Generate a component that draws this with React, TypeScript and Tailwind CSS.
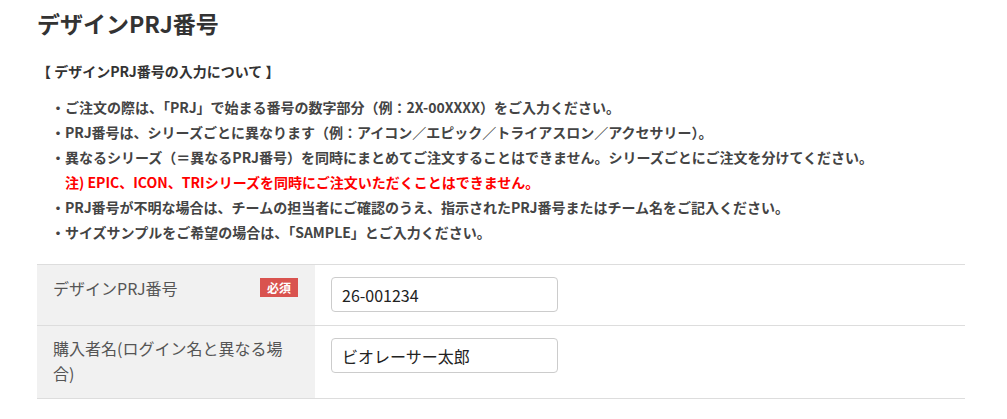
const notes = [
  { text: "・ご注文の際は、「PRJ」で始まる番号の数字部分（例：2X-00XXXX）をご入力ください。" },
  { text: "・PRJ番号は、シリーズごとに異なります（例：アイコン／エピック／トライアスロン／アクセサリー）。" },
  { text: "・異なるシリーズ（＝異なるPRJ番号）を同時にまとめてご注文することはできません。シリーズごとにご注文を分けてください。" },
  { text: "注) EPIC、ICON、TRIシリーズを同時にご注文いただくことはできません。", warn: true },
  { text: "・PRJ番号が不明な場合は、チームの担当者にご確認のうえ、指示されたPRJ番号またはチーム名をご記入ください。" },
  { text: "・サイズサンプルをご希望の場合は、「SAMPLE」とご入力ください。" },
];

const App = () => {
  return (
    <div className="min-h-screen bg-white text-[#333] font-['Noto_Sans_CJK_JP','Noto_Sans',sans-serif]">
      <div className="pl-[37px] pr-[42px] pt-[5px]">
        {/* Page heading */}
        <h1 className="text-[23px] leading-[36px] font-bold">デザインPRJ番号</h1>

        <p className="mt-[20px] text-[14px] leading-[20px] font-bold">【 デザインPRJ番号の入力について 】</p>

        {/* Notes */}
        <ul className="mt-[14px] pl-[14px] text-[14px] leading-[25px] font-bold">
          {notes.map((n, i) => (
            <li key={i} className={n.warn ? "pl-[14px] text-[#ff0000]" : "text-[#444]"}>
              {n.text}
            </li>
          ))}
        </ul>

        {/* Form table */}
        <div className="mt-[19px] border-t border-[#ddd]">
          <div className="flex border-b border-[#ddd]">
            <div className="w-[278px] shrink-0 bg-[#f1f1f1] pl-[16px] pr-[17px] pt-[11px] flex items-start justify-between">
              <span className="text-[16px] leading-[25px] text-[#555]">デザインPRJ番号</span>
              <span className="mt-[2px] bg-[#d9534f] text-white text-[12px] leading-[19px] font-bold px-[7px]">必須</span>
            </div>
            <div className="flex-1 pl-[16px] pt-[12px] pb-[13px]">
              <input
                className="block w-[227px] h-[35px] border border-[#ccc] rounded-[4px] px-[10px] text-[16px] text-[#222] outline-none"
                defaultValue="26-001234"
              />
            </div>
          </div>
          <div className="flex border-b border-[#ddd]">
            <div className="w-[278px] shrink-0 bg-[#f1f1f1] pl-[16px] pr-[17px] pt-[10px] pb-[12px]">
              <span className="block w-[232px] text-[16px] leading-[25px] text-[#555]">購入者名(ログイン名と異なる場合)</span>
            </div>
            <div className="flex-1 pl-[16px] pt-[12px]">
              <input
                className="block w-[227px] h-[35px] border border-[#ccc] rounded-[4px] px-[10px] text-[16px] text-[#222] outline-none"
                defaultValue="ビオレーサー太郎"
              />
            </div>
          </div>
        </div>
      </div>
    </div>
  );
};

export default App;
